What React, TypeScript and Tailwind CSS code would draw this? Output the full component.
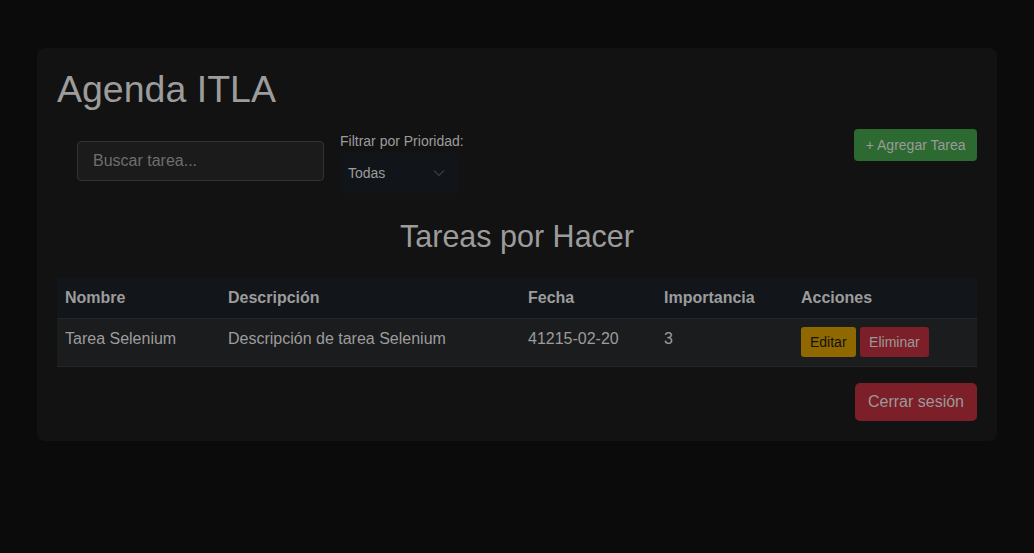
import React from "react";

const tasks = [
  {
    nombre: "Tarea Selenium",
    descripcion: "Descripción de tarea Selenium",
    fecha: "41215-02-20",
    importancia: "3",
  },
];

export default function App() {
  return (
    <div
      className="min-h-[553px] w-full bg-[#0b0b0b] px-[37px] pt-[48px]"
      style={{ fontFamily: '"Liberation Sans", Arial, sans-serif' }}
    >
      <div className="w-[960px] rounded-[8px] bg-[#121212] px-[20px] pt-[20px] pb-[20px]">
        {/* Header */}
        <h1 className="text-[37.5px] leading-[43px] text-[#9c9c9c]">Agenda ITLA</h1>

        {/* Toolbar */}
        <div className="mt-[18px] flex items-start justify-between">
          <div className="flex items-start">
            <input
              type="text"
              placeholder="Buscar tarea..."
              className="mt-[12px] ml-[20px] h-[40px] w-[247px] rounded-[4px] border border-[#333] bg-[#1b1b1b] px-[15px] text-[16px] text-[#9c9c9c] placeholder:text-[#6e6e6e] outline-none"
            />
            <div className="ml-[16px] flex flex-col">
              <label className="mt-[2px] text-[14px] leading-[20px] text-[#9c9c9c]">
                Filtrar por Prioridad:
              </label>
              <div className="mt-[2px] flex h-[40px] w-[119px] items-center justify-between rounded-[4px] bg-[#111418] pl-[8px] pr-[14px]">
                <span className="text-[14px] text-[#9c9c9c]">Todas</span>
                <svg width="12" height="8" viewBox="0 0 12 8" fill="none" stroke="#3a3d42" strokeWidth="1.2">
                  <path d="M1 1.5l5 5 5-5" />
                </svg>
              </div>
            </div>
          </div>
          <button className="h-[32px] rounded-[4px] bg-[#2d6a31] px-[11.5px] text-[14px] text-[#9a9a9a]">
            + Agregar Tarea
          </button>
        </div>

        {/* Title */}
        <h2 className="mt-[24px] text-center text-[30.5px] leading-[38px] text-[#9c9c9c]">
          Tareas por Hacer
        </h2>

        {/* Table */}
        <table className="mt-[23px] w-full border-collapse text-left text-[16px] text-[#9c9c9c]">
          <thead>
            <tr className="bg-[#121519]">
              <th className="w-[163px] px-[8px] py-[8px] leading-[24px] font-bold">Nombre</th>
              <th className="w-[300px] px-[8px] py-[8px] leading-[24px] font-bold">Descripción</th>
              <th className="w-[136px] px-[8px] py-[8px] leading-[24px] font-bold">Fecha</th>
              <th className="w-[137px] px-[8px] py-[8px] leading-[24px] font-bold">Importancia</th>
              <th className="px-[8px] py-[8px] leading-[24px] font-bold">Acciones</th>
            </tr>
          </thead>
          <tbody>
            {tasks.map((t) => (
              <tr key={t.nombre} className="border-y border-[#232529] bg-[#1b1c1e]">
                <td className="px-[8px] pt-[8px] pb-[15px] align-top leading-[24px]">{t.nombre}</td>
                <td className="px-[8px] pt-[8px] pb-[15px] align-top leading-[24px]">{t.descripcion}</td>
                <td className="px-[8px] pt-[8px] pb-[15px] align-top leading-[24px]">{t.fecha}</td>
                <td className="px-[8px] pt-[8px] pb-[15px] align-top leading-[24px]">{t.importancia}</td>
                <td className="px-[8px] pt-[8px] pb-[9px] align-top">
                  <div className="flex gap-[4px]">
                    <button className="h-[30px] rounded-[3px] bg-[#8f6900] px-[9px] text-[14px] text-[#111]">
                      Editar
                    </button>
                    <button className="h-[30px] rounded-[3px] bg-[#7d1f28] px-[9.5px] text-[14px] text-[#9a9a9a]">
                      Eliminar
                    </button>
                  </div>
                </td>
              </tr>
            ))}
          </tbody>
        </table>

        {/* Logout */}
        <div className="mt-[16px] flex justify-end">
          <button className="h-[38px] rounded-[5px] bg-[#7d1f28] px-[13px] text-[16px] text-[#9a9a9a]">
            Cerrar sesión
          </button>
        </div>
      </div>
    </div>
  );
}
